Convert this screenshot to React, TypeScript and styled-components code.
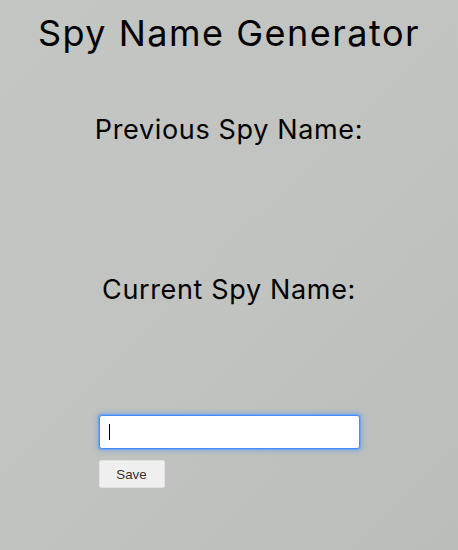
import React from 'react';
import styled, { createGlobalStyle } from 'styled-components';

const GlobalStyle = createGlobalStyle`
  html, body {
    margin: 0;
    padding: 0;
    min-height: 100%;
  }
  body {
    min-height: 550px;
    background: linear-gradient(135deg, #c3c6c2 0%, #c0c3bf 55%, #bbbdb9 100%);
    font-family: Inter, "Noto Sans", sans-serif;
    color: #000;
  }
`;

const Page = styled.main`
  display: flex;
  flex-direction: column;
  align-items: center;
  padding-top: 13px;
`;

const Title = styled.h1`
  margin: 0 0 61px;
  font-size: 36px;
  line-height: 40px;
  font-weight: 400;
  letter-spacing: 1.5px;
`;

const Section = styled.section`
  display: flex;
  flex-direction: column;
  align-items: center;
`;

const Label = styled.h2`
  margin: 0;
  font-size: 27px;
  line-height: 32px;
  font-weight: 400;
  letter-spacing: 0.65px;
`;

const NameSlot = styled.p<{ $space: number }>`
  margin: 0;
  height: ${({ $space }) => $space}px;
`;

const Form = styled.form`
  width: 261px;
  display: flex;
  flex-direction: column;
  align-items: flex-start;
  gap: 11px;
`;

const Field = styled.div`
  position: relative;
  width: 100%;
`;

const Input = styled.input`
  box-sizing: border-box;
  width: 100%;
  height: 34px;
  padding: 0 9px;
  border: 1px solid #4a8df0;
  border-radius: 3px;
  background: #fff;
  box-shadow: 0 0 0 1px #6ea4f3, 0 0 5px 2px rgba(90, 150, 240, 0.5);
  font-family: "Liberation Sans", Arial, sans-serif;
  font-size: 15px;
  caret-color: transparent;
  outline: none;
`;

const Caret = styled.span`
  position: absolute;
  left: 10px;
  top: 9px;
  width: 1px;
  height: 16px;
  background: #000;
`;

const SaveButton = styled.button`
  box-sizing: border-box;
  width: 66px;
  height: 28px;
  padding: 0;
  border: 1px solid #e2e2e2;
  border-radius: 2px;
  background: #efefef;
  color: #333;
  font-family: "Liberation Sans", Arial, sans-serif;
  font-size: 13.33px;
`;

export default function App() {
  return (
    <>
      <GlobalStyle />
      <Page>
        <Title>Spy Name Generator</Title>
        <Section>
          <Label>Previous Spy Name:</Label>
          <NameSlot $space={128} />
        </Section>
        <Section>
          <Label>Current Spy Name:</Label>
          <NameSlot $space={109} />
        </Section>
        <Form onSubmit={e => e.preventDefault()}>
          <Field>
            <Input type="text" aria-label="Spy name" />
            <Caret />
          </Field>
          <SaveButton type="submit">Save</SaveButton>
        </Form>
      </Page>
    </>
  );
}
